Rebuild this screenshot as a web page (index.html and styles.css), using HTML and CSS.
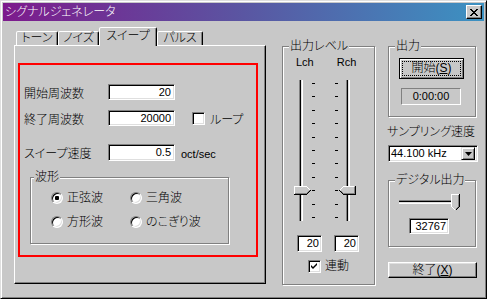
FILE: index.html
```html
<!DOCTYPE html>
<html lang="ja">
<head>
    <meta charset="UTF-8">
    <title>シグナルジェネレータ</title>
    <link rel="stylesheet" href="styles.css">
</head>
<body>
    <div class="window">
        <div class="titlebar">
            <span class="title">シグナルジェネレータ</span>
            <span class="close-btn">
                <svg width="8" height="7" viewBox="0 0 8 7"><path d="M0 0h2v1h-2zM6 0h2v1h-2zM1 1h2v1h-2zM5 1h2v1h-2zM2 2h4v1h-4zM3 3h2v1h-2zM2 4h4v1h-4zM1 5h2v1h-2zM5 5h2v1h-2zM0 6h2v1h-2zM6 6h2v1h-2z" fill="#000"/></svg>
            </span>
        </div>

        <div class="client">
            <!-- tab control -->
            <div class="tabctl">
                <div class="tabs">
                    <div class="tab tab-tone">トーン</div>
                    <div class="tab tab-noise">ノイズ</div>
                    <div class="tab tab-sweep active">スイープ</div>
                    <div class="tab tab-pulse">パルス</div>
                </div>
                <div class="panel">
                    <div class="marked">
                        <div class="row">
                            <span class="lbl">開始周波数</span>
                            <span class="edit freq">20</span>
                        </div>
                        <div class="row row-end">
                            <span class="lbl">終了周波数</span>
                            <span class="edit freq">20000</span>
                            <span class="check loop-check"></span>
                            <span class="check-text">ループ</span>
                        </div>
                        <div class="row row-speed">
                            <span class="lbl">スイープ速度</span>
                            <span class="edit freq">0.5</span>
                            <span class="unit">oct/sec</span>
                        </div>
                        <div class="group wave">
                            <div class="group-label">波形</div>
                            <div class="radios">
                                <div class="radio"><span class="radio-dot on"></span>正弦波</div>
                                <div class="radio"><span class="radio-dot"></span>三角波</div>
                                <div class="radio"><span class="radio-dot"></span>方形波</div>
                                <div class="radio"><span class="radio-dot"></span>のこぎり波</div>
                            </div>
                        </div>
                    </div>
                </div>
            </div>

            <!-- output level -->
            <div class="group level">
                <div class="group-label">出力レベル</div>
                <div class="ch-row"><span>Lch</span><span>Rch</span></div>
                <svg class="faders" width="70" height="146" viewBox="0 0 70 146" shape-rendering="crispEdges">
                    <rect x="9" y="2" width="1" height="141" fill="#808080"/>
                    <rect x="10" y="2" width="1" height="141" fill="#000"/>
                    <rect x="11" y="2" width="1" height="141" fill="#dfdfdf"/>
                    <rect x="12" y="2" width="1" height="141" fill="#fff"/>
                    <rect x="56" y="2" width="1" height="141" fill="#808080"/>
                    <rect x="57" y="2" width="1" height="141" fill="#000"/>
                    <rect x="58" y="2" width="1" height="141" fill="#dfdfdf"/>
                    <rect x="59" y="2" width="1" height="141" fill="#fff"/>
                    <g fill="#000">
                        <rect x="22" y="5" width="3" height="1"/><rect x="45" y="5" width="3" height="1"/>
                        <rect x="22" y="18" width="3" height="1"/><rect x="45" y="18" width="3" height="1"/>
                        <rect x="22" y="32" width="3" height="1"/><rect x="45" y="32" width="3" height="1"/>
                        <rect x="22" y="45" width="3" height="1"/><rect x="45" y="45" width="3" height="1"/>
                        <rect x="22" y="59" width="3" height="1"/><rect x="45" y="59" width="3" height="1"/>
                        <rect x="22" y="72" width="3" height="1"/><rect x="45" y="72" width="3" height="1"/>
                        <rect x="22" y="85" width="3" height="1"/><rect x="45" y="85" width="3" height="1"/>
                        <rect x="22" y="99" width="3" height="1"/><rect x="45" y="99" width="3" height="1"/>
                        <rect x="22" y="112" width="3" height="1"/><rect x="45" y="112" width="3" height="1"/>
                        <rect x="22" y="126" width="3" height="1"/><rect x="45" y="126" width="3" height="1"/>
                        <rect x="22" y="139" width="3" height="1"/><rect x="45" y="139" width="3" height="1"/>
                    </g>
                    <!-- left thumb -->
                    <polygon points="4,108 16,108 20,112 16,116 4,116" fill="#c8c8c8"/>
                    <polyline points="4.5,116 4.5,108.5 16.5,108.5 20,112" fill="none" stroke="#fff"/>
                    <polyline points="5,115.5 16.5,115.5 19.5,112.5" fill="none" stroke="#808080"/>
                    <polyline points="4,116.5 16.5,116.5 20.5,112.5" fill="none" stroke="#000"/>
                    <!-- right thumb -->
                    <polygon points="65,108 53,108 49,112 53,116 65,116" fill="#c8c8c8"/>
                    <polyline points="49.5,112.5 53.5,108.5 64,108.5" fill="none" stroke="#fff"/>
                    <polyline points="50,113 53.5,115.5 64.5,115.5 64.5,109" fill="none" stroke="#808080"/>
                    <polyline points="49.5,112.5 53.5,116.5 65.5,116.5 65.5,108" fill="none" stroke="#000"/>
                </svg>
                <div class="num-row">
                    <span class="edit small">20</span>
                    <span class="edit small">20</span>
                </div>
                <div class="link-row">
                    <span class="check on">
                        <svg width="9" height="9" viewBox="0 0 9 9"><polygon points="1,3 3,5 7,1 7,3 3,7 1,5" fill="#000"/></svg>
                    </span>
                    <span>連動</span>
                </div>
            </div>

            <!-- right column -->
            <div class="side">
                <div class="group out">
                    <div class="group-label">出力</div>
                    <div class="btn default start-btn"><span class="focus">開始(<u>S</u>)</span></div>
                    <div class="status">0:00:00</div>
                </div>
                <div class="rate-label">サンプリング速度</div>
                <div class="combo">
                    <span class="combo-text">44.100 kHz</span>
                    <span class="combo-btn">
                        <svg width="7" height="4" viewBox="0 0 7 4"><path d="M0 0h7l-3.5 4z" fill="#000"/></svg>
                    </span>
                </div>
                <div class="group digital">
                    <div class="group-label">デジタル出力</div>
                    <svg class="dslider" width="64" height="18" viewBox="0 0 64 18" shape-rendering="crispEdges">
                        <rect x="0" y="6" width="54" height="1" fill="#808080"/>
                        <rect x="0" y="7" width="54" height="1" fill="#000"/>
                        <rect x="0" y="8" width="54" height="1" fill="#dfdfdf"/>
                        <rect x="0" y="9" width="54" height="1" fill="#fff"/>
                        <polygon points="52,0 60,0 60,12 56,16 52,12" fill="#c8c8c8"/>
                        <polyline points="52.5,12 52.5,0.5 60,0.5" fill="none" stroke="#fff"/>
                        <polyline points="52.5,12.5 56,16" fill="none" stroke="#fff"/>
                        <polyline points="59.5,1 59.5,12.5 56.5,15.5" fill="none" stroke="#808080"/>
                        <polyline points="60.5,0 60.5,12.5 56.5,16.5" fill="none" stroke="#000"/>
                    </svg>
                    <span class="edit dvalue">32767</span>
                </div>
                <div class="btn exit-btn">終了(<u>X</u>)</div>
            </div>
        </div>
    </div>
</body>
</html>
```

FILE: styles.css
```css
* {
    box-sizing: border-box;
}

body {
    margin: 0;
    background: #c8c8c8;
    font-family: "Liberation Sans", "Noto Sans CJK JP", sans-serif;
    font-size: 12px;
    font-weight: 300;
    color: #000;
    font-feature-settings: "palt";
}

.window {
    width: 487px;
    height: 299px;
    border: 1px solid;
    border-color: #dfdfdf #000 #000 #dfdfdf;
    box-shadow: inset 1px 1px #fff, inset -1px -1px #808080;
    padding: 2px;
    background: #c8c8c8;
}

.titlebar {
    height: 18px;
    display: flex;
    align-items: center;
    background: linear-gradient(to right, #7d1a8c, #5a56a2 50%, #3c92c2);
    color: #fff;
}

.title {
    padding-left: 2px;
    line-height: 18px;
}

.close-btn {
    margin-left: auto;
    margin-right: 2px;
    width: 16px;
    height: 14px;
    display: flex;
    align-items: center;
    justify-content: center;
    background: #c8c8c8;
    border: 1px solid;
    border-color: #fff #000 #000 #fff;
    box-shadow: inset -1px -1px #808080;
}

.close-btn svg {
    display: block;
}

.client {
    display: flex;
    align-items: flex-start;
}

/* tabs */
.tabctl {
    width: 252px;
    margin-left: 11px;
    margin-top: 6px;
}

.tabs {
    display: flex;
    align-items: flex-end;
    height: 18px;
    padding-left: 2px;
}

.tab {
    height: 14px;
    border: 1px solid;
    border-bottom: none;
    border-color: #fff #000 transparent #fff;
    border-radius: 2px 2px 0 0;
    box-shadow: inset -1px 0 #808080;
    text-align: center;
    line-height: 13px;
    background: #c8c8c8;
}

.tab-tone { width: 42px; }
.tab-noise { width: 41px; }
.tab-sweep { width: 58px; }
.tab-pulse { width: 46px; }

.tab.active {
    height: 19px;
    margin-bottom: -1px;
    position: relative;
    z-index: 1;
    padding-top: 1px;
    line-height: 14px;
}

.panel {
    height: 239px;
    border: 1px solid;
    border-color: #fff #000 #000 #fff;
    box-shadow: inset -1px -1px #808080;
    padding: 17px 0 0 3px;
}

.marked {
    width: 240px;
    height: 194px;
    border: 2px solid #f00;
    padding: 19px 0 0 4px;
}

.row {
    display: flex;
    align-items: center;
    height: 16px;
}

.row-end {
    margin-top: 10px;
}

.row-speed {
    margin-top: 18px;
    height: 17px;
}

.lbl {
    width: 84px;
}

.edit {
    display: block;
    height: 16px;
    background: #fff;
    border: 1px solid;
    border-color: #808080 #fff #fff #808080;
    box-shadow: inset 1px 1px #000, inset -1px -1px #dfdfdf;
    text-align: right;
    padding-right: 3px;
    font-size: 11px;
    font-weight: 400;
    line-height: 14px;
}

.freq {
    width: 67px;
}

.row-speed .freq {
    height: 17px;
    line-height: 15px;
}

.check {
    width: 13px;
    height: 13px;
    display: flex;
    align-items: center;
    justify-content: center;
    background: #fff;
    border: 1px solid;
    border-color: #808080 #fff #fff #808080;
    box-shadow: inset 1px 1px #000, inset -1px -1px #dfdfdf;
}

.check svg {
    display: block;
}

.loop-check {
    margin-left: 17px;
}

.check-text {
    margin-left: 5px;
}

.unit {
    align-self: flex-end;
    margin-left: 6px;
    font-size: 11px;
    font-weight: 400;
    line-height: 14px;
}

/* etched group boxes */
.group {
    border: 1px solid #808080;
    box-shadow: inset 1px 1px #fff, 1px 1px #fff;
}

.group-label {
    width: fit-content;
    margin: -8px 0 0 6px;
    padding: 0 1px;
    line-height: 14px;
    background: #c8c8c8;
}

.wave {
    width: 199px;
    height: 67px;
    margin: 16px 0 0 6px;
}

.wave .group-label {
    margin-left: 3px;
}

.radios {
    display: grid;
    grid-template-columns: 79px auto;
    row-gap: 12px;
    margin-top: 8px;
    padding-left: 20px;
}

.radio {
    display: flex;
    align-items: center;
    gap: 4px;
    height: 12px;
    line-height: 12px;
}

.radio-dot {
    width: 12px;
    height: 12px;
    border-radius: 50%;
    border: 1px solid;
    border-color: #808080 #fff #fff #808080;
    box-shadow: inset 1px 1px #000, inset -1px -1px #dfdfdf;
    background: #fff;
}

.radio-dot.on {
    background: radial-gradient(circle, #000 2px, #fff 2.5px);
}

/* output level */
.level {
    width: 93px;
    height: 239px;
    margin: 25px 0 0 16px;
}

.ch-row {
    display: flex;
    gap: 23px;
    margin-top: 3px;
    padding-left: 13px;
    font-size: 11px;
    font-weight: 400;
    line-height: 13px;
}

.faders {
    display: block;
    margin: 9px 0 0 7px;
}

.num-row {
    display: flex;
    gap: 12px;
    margin-top: 11px;
    padding-left: 14px;
}

.small {
    width: 25px;
    height: 17px;
    line-height: 15px;
    padding-right: 2px;
}

.link-row {
    display: flex;
    align-items: center;
    gap: 4px;
    margin-top: 8px;
    padding-left: 25px;
    line-height: 13px;
}

/* right column */
.side {
    width: 90px;
    margin-left: 13px;
    display: flex;
    flex-direction: column;
}

.out {
    width: 88px;
    height: 71px;
    margin-top: 25px;
}

.btn {
    display: flex;
    align-items: center;
    justify-content: center;
    background: #c8c8c8;
    border: 1px solid;
    border-color: #fff #000 #000 #fff;
    box-shadow: inset -1px -1px #808080, inset 1px 1px #dfdfdf;
}

.btn.default {
    border-color: #000;
    box-shadow: inset 1px 1px #fff, inset -1px -1px #808080;
}

.start-btn {
    width: 65px;
    height: 21px;
    margin: 5px 0 0 10px;
    padding: 2px;
}

.focus {
    flex: 1;
    align-self: stretch;
    display: flex;
    align-items: center;
    justify-content: center;
    border: 1px dotted #000;
    line-height: 13px;
}

.status {
    width: 60px;
    height: 17px;
    margin: 9px 0 0 12px;
    border: 1px solid;
    border-color: #808080 #fff #fff #808080;
    text-align: center;
    font-size: 11px;
    font-weight: 400;
    line-height: 15px;
}

.rate-label {
    margin: 8px 0 0 -1px;
    line-height: 14px;
    white-space: nowrap;
}

.combo {
    display: flex;
    align-items: center;
    width: 90px;
    height: 17px;
    margin-top: 6px;
    padding: 2px;
    background: #fff;
    border: 1px solid;
    border-color: #808080 #fff #fff #808080;
    box-shadow: inset 1px 1px #000, inset -1px -1px #dfdfdf;
}

.combo-text {
    flex: 1;
    font-size: 11px;
    font-weight: 400;
    line-height: 13px;
}

.combo-btn {
    width: 14px;
    height: 13px;
    display: flex;
    align-items: center;
    justify-content: center;
    background: #c8c8c8;
    border: 1px solid;
    border-color: #dfdfdf #000 #000 #dfdfdf;
    box-shadow: inset 1px 1px #fff, inset -1px -1px #808080;
}

.combo-btn svg {
    display: block;
}

.digital {
    width: 88px;
    height: 67px;
    margin-top: 18px;
}

.dslider {
    display: block;
    margin: 7px 0 0 10px;
}

.dvalue {
    width: 40px;
    margin: 6px 0 0 20px;
    padding-right: 2px;
}

.exit-btn {
    width: 89px;
    height: 16px;
    margin-top: 15px;
    line-height: 14px;
}
```
